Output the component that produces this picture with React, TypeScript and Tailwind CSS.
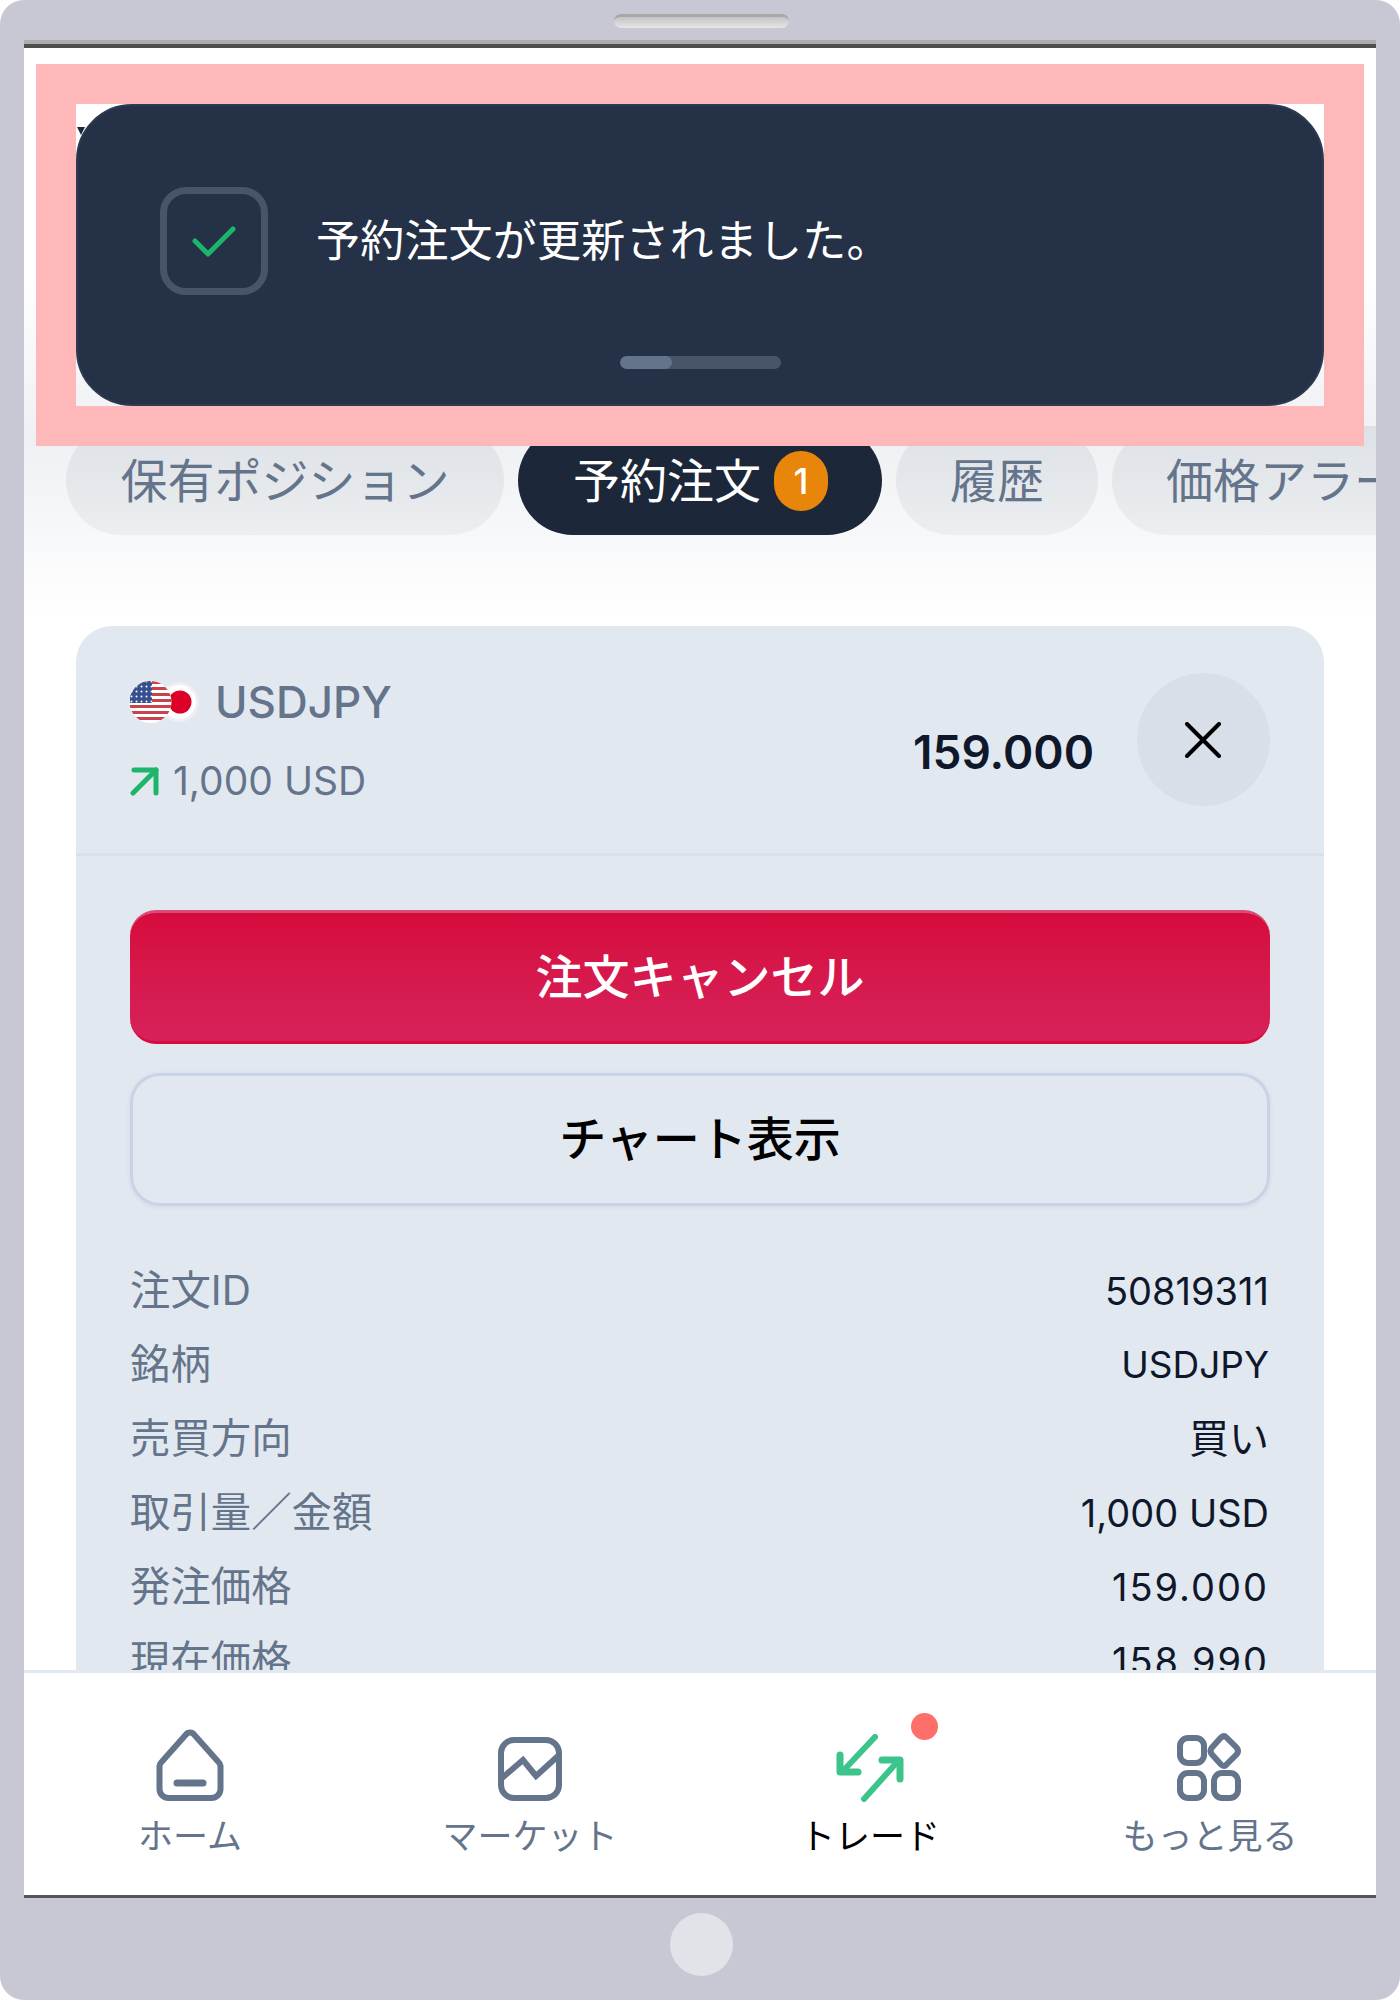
const orders = [
  { label: '注文ID', value: '50819311', valueClass: 'text-[38px]' },
  { label: '銘柄', value: 'USDJPY', valueClass: 'text-[37px]' },
  { label: '売買方向', value: '買い', valueClass: 'text-[40px]' },
  { label: '取引量／金額', value: '1,000 USD', valueClass: 'text-[38px]' },
  { label: '発注価格', value: '159.000', valueClass: 'text-[38px] tracking-[2px]' },
  { label: '現在価格', value: '158.990', valueClass: 'text-[38px] tracking-[2px]' },
];

const HomeIcon = () => (
  <svg width="68" height="72" viewBox="0 0 68 72" fill="none" stroke="#64748b" strokeWidth="6" strokeLinejoin="round" strokeLinecap="round">
    <path d="M30 5.500a5 5 0 0 1 8 0l24 27a7 7 0 0 1 2.500 4.500V60a9 9 0 0 1-9 9H12.500a9 9 0 0 1-9-9V37a7 7 0 0 1 2.500-4.500z" />
    <path d="M21 54h26" strokeWidth="7" />
  </svg>
);

const MarketIcon = () => (
  <svg width="64" height="64" viewBox="0 0 64 64" fill="none" stroke="#64748b" strokeWidth="6" strokeLinejoin="miter">
    <rect x="3" y="3" width="58" height="58" rx="13" />
    <path d="M4 41l21-18 13 16 22-20" />
  </svg>
);

const TradeIcon = () => (
  <svg width="68" height="68" viewBox="0 0 68 68" fill="none" stroke="#3cc48c" strokeWidth="6" strokeLinejoin="round" strokeLinecap="round" className="translate-y-px">
    <path d="M39 3L6 38" />
    <path d="M4 21v17h18" strokeWidth="7" />
    <path d="M28 65l35-39" />
    <path d="M46 26h18v19" strokeWidth="7" />
  </svg>
);

const MoreIcon = () => (
  <svg width="66" height="68" viewBox="0 0 66 68" fill="none" stroke="#64748b" strokeWidth="6">
    <rect x="3" y="5" width="24" height="25" rx="8" />
    <path d="M44 4.500q3-2.500 5.500 0l10 10q3 3.500 0 7l-10 10q-2.500 3-5.500 0l-9-10q-3-3.500 0-7z" />
    <rect x="3" y="40" width="24" height="25" rx="8" />
    <rect x="37" y="40" width="24" height="25" rx="8" />
  </svg>
);

const UsdJpyFlags = () => (
  <svg width="70" height="44" viewBox="0 0 70 44" className="shrink-0">
    <defs>
      <clipPath id="us-clip">
        <circle cx="20.500" cy="22" r="21" />
      </clipPath>
      <pattern id="us-stars" width="5" height="5" patternUnits="userSpaceOnUse">
        <circle cx="1.500" cy="1.500" r="1" fill="#ffffff" />
      </pattern>
    </defs>
    <circle cx="49" cy="22" r="20" fill="#eceff3" />
    <circle cx="49" cy="22" r="17" fill="#ffffff" />
    <circle cx="50" cy="22" r="11.500" fill="#dc0028" />
    <g clipPath="url(#us-clip)">
      <rect x="0" y="1" width="42" height="42" fill="#ffffff" />
      {[1, 7, 13, 19, 25, 31, 37].map((y) => (
        <rect key={y} x="0" y={y} width="42" height="3" fill="#c9424c" />
      ))}
      <rect x="0" y="1" width="22" height="22" fill="#34508f" />
      <rect x="0" y="1" width="22" height="22" fill="url(#us-stars)" />
    </g>
  </svg>
);

const NavItem = ({ label, active, children }: { label: string; active?: boolean; children: React.ReactNode }) => (
  <div className="flex flex-col items-center">
    <div className="relative flex h-[72px] items-end justify-center">{children}</div>
    <span className={`mt-[10px] text-[35px] leading-[50px] ${active ? 'text-black' : 'text-[#64748b]'}`}>{label}</span>
  </div>
);

export default function App() {
  return (
    <div className="relative flex h-[2000px] w-[1400px] flex-col overflow-hidden bg-white font-['Inter','Noto_Sans_CJK_JP',sans-serif]">
      <div className="flex h-full flex-col overflow-hidden rounded-[24px] bg-[#c8c8d4]">
        {/* top bezel */}
        <div className="flex h-[40px] shrink-0 justify-center pl-[2px] pt-[14px]">
          <div className="h-[14px] w-[175px] rounded-full border-t-[3px] border-[#a8a8a8] bg-gradient-to-b from-[#c4c4c4] to-[#e6e6e9]" />
        </div>

        <div className="mx-[24px] flex min-h-0 flex-1 flex-col bg-white">
          <div className="h-[4px] shrink-0 bg-[#adadad]" />
          <div className="h-[4px] shrink-0 bg-[#4f4f4f]" />

          <div className="min-h-0 flex-1 overflow-hidden bg-gradient-to-b from-white from-[14%] via-[#eef0f3] via-[24%] to-white to-[35%]">
            {/* page title peeking out from behind the toast */}
            <div className="ml-[53px] mt-[79px] h-0 w-0 border-x-[4px] border-t-[8px] border-x-transparent border-t-[#1c2739]" />

            {/* tabs */}
            <div className="mt-[291px] flex gap-[14px] overflow-hidden pl-[42px] text-[47px] leading-[109px]">
              <div className="h-[109px] shrink-0 rounded-full bg-gradient-to-b from-[#dde1e5] to-[#eceef1] px-[54.500px] text-[#64748b]">保有ポジション</div>
              <div className="flex h-[109px] shrink-0 items-center gap-[13px] rounded-full bg-[#1c2739] pl-[55px] pr-[54px] text-white">
                予約注文
                <span className="flex h-[60px] w-[54px] items-center justify-center rounded-full bg-[#e8860c] text-[36px] font-medium leading-none">1</span>
              </div>
              <div className="h-[109px] shrink-0 rounded-full bg-gradient-to-b from-[#dde1e5] to-[#eceef1] px-[54px] text-[#64748b]">履歴</div>
              <div className="h-[109px] shrink-0 rounded-full bg-gradient-to-b from-[#dde1e5] to-[#eceef1] px-[54px] text-[#64748b]">価格アラート</div>
            </div>

            {/* order card */}
            <div className="mx-[52px] mt-[91px] rounded-t-[36px] bg-[#e2e8f0]">
              <div className="flex h-[230px] items-start border-b-[3px] border-[#d9e1ea] px-[54px]">
                <div className="flex flex-col pt-[46px]">
                  <div className="flex h-[60px] items-center">
                    <UsdJpyFlags />
                    <span className="ml-[15px] text-[44px] font-medium leading-[60px] text-[#64748b]">USDJPY</span>
                  </div>
                  <div className="mt-[25px] flex h-[48px] items-center">
                    <svg width="30" height="30" viewBox="0 0 30 30" fill="none" stroke="#1db56a" strokeWidth="5" strokeLinecap="round" strokeLinejoin="round">
                      <path d="M3 27L26 4" />
                      <path d="M4 4h22v23" />
                    </svg>
                    <span className="ml-[13px] text-[39px] leading-[48px] text-[#64748b]">1,000 USD</span>
                  </div>
                </div>
                <div className="ml-auto pt-[96px] text-[46px] font-semibold leading-[60px] text-[#0f172a]">159.000</div>
                <div className="ml-[43px] mt-[47px] flex h-[133px] w-[133px] shrink-0 items-center justify-center rounded-full bg-[#d8dfe9]">
                  <svg width="36" height="36" viewBox="0 0 36 36" fill="none" stroke="#000000" strokeWidth="4" strokeLinecap="round" className="-translate-x-px">
                    <path d="M2 2l32 32M34 2L2 34" />
                  </svg>
                </div>
              </div>

              <div className="flex flex-col px-[54px] pt-[54px]">
                <div className="flex h-[134px] items-center justify-center rounded-[26px] border-y-[3px] border-t-[#d94b78] border-b-[#d90a3e] bg-gradient-to-b from-[#d60b3c] to-[#d6215b] text-[47px] font-medium text-white">
                  注文キャンセル
                </div>
                <div className="mt-[29px] flex h-[133px] items-center justify-center rounded-[30px] border-[3px] border-[#c8d4e6] text-[47px] font-medium text-black shadow-[0_1px_4px_rgba(100,116,139,0.12)]">
                  チャート表示
                </div>

                <div className="mt-[48px] flex flex-col">
                  {orders.map((row) => (
                    <div key={row.label} className="flex h-[74px] items-center justify-between leading-[74px]">
                      <span className="text-[40.400px] text-[#64748b]">{row.label}</span>
                      <span className={`pr-px text-[#0f172a] ${row.valueClass}`}>{row.value}</span>
                    </div>
                  ))}
                </div>
              </div>
            </div>
          </div>

          {/* bottom nav */}
          <div className="grid h-[228px] shrink-0 grid-cols-[repeat(4,340px)] justify-center border-y-[3px] border-t-[#e2e8f0] border-b-[#55555c] bg-white pt-[56px]">
            <NavItem label="ホーム">
              <HomeIcon />
            </NavItem>
            <NavItem label="マーケット">
              <MarketIcon />
            </NavItem>
            <NavItem label="トレード" active>
              <TradeIcon />
              <span className="absolute left-[75px] top-[-16px] h-[27px] w-[27px] rounded-full bg-[#ff6f69]" />
            </NavItem>
            <NavItem label="もっと見る">
              <MoreIcon />
            </NavItem>
          </div>
        </div>

        {/* bottom bezel */}
        <div className="flex h-[102px] shrink-0 justify-center pl-[2px] pt-[15px]">
          <div className="h-[63px] w-[63px] rounded-full bg-[#e2e3e9]" />
        </div>
      </div>

      {/* highlighted toast overlay */}
      <div className="absolute left-[36px] top-[64px] h-[382px] w-[1328px] border-[40px] border-[#ffb8ba]">
        <div className="flex h-full flex-col rounded-[56px] border-2 border-[#2e3a51] bg-[#253147]">
          <div className="flex items-center pl-[82px] pt-[81px]">
            <div className="flex h-[108px] w-[108px] items-center justify-center rounded-[26px] border-[7px] border-[#475569]">
              <svg width="44" height="33" viewBox="0 0 44 33" fill="none" stroke="#1db56a" strokeWidth="5" strokeLinecap="round" strokeLinejoin="round">
                <path d="M3 16l13 13L41 4" />
              </svg>
            </div>
            <span className="ml-[48px] text-[44px] font-normal tracking-[0.2px] text-white">予約注文が更新されました。</span>
          </div>
          <div className="mx-auto mt-[61px] h-[13px] w-[161px] overflow-hidden rounded-full bg-[#475569]">
            <div className="h-full w-[52px] rounded-full bg-[#64748b]" />
          </div>
        </div>
      </div>
    </div>
  );
}
